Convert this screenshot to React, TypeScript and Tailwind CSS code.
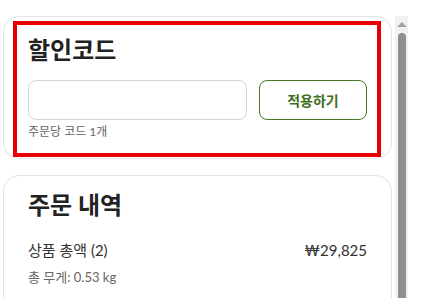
export default function App() {
  return (
    <div
      className="w-[435px] h-[298px] overflow-hidden bg-white flex pt-[16px]"
      style={{ fontFamily: '"Lato", "Noto Sans CJK KR", sans-serif' }}
    >
      {/* scroll content */}
      <div className="w-[395px] pl-[3px] pr-[3px] flex flex-col gap-[16px]">
        {/* discount code card */}
        <div className="border border-[#e3e3e3] rounded-[16px] bg-white pl-[9px] pt-[4px] pr-[10px] pb-[1px]">
          <div className="border-[4px] border-[#e80000] pl-[11px] pr-[10px] pt-[9px] pb-[13px]">
            <h2 className="text-[24px] leading-[32px] font-bold text-[#222]">할인코드</h2>
            <div className="flex gap-[12px] mt-[14px]">
              <input className="w-[219px] h-[40px] border border-[#d2d2d2] rounded-[8px] px-3 outline-none" />
              <button className="w-[110px] h-[40px] border border-[#4a7a25] rounded-[8px] text-[14px] font-bold text-[#3f6e1c]">
                적용하기
              </button>
            </div>
            <p className="mt-[4px] text-[12px] leading-[16px] text-[#666]">주문당 코드 1개</p>
          </div>
        </div>

        {/* order summary card */}
        <div className="border border-[#e3e3e3] rounded-[16px] bg-white pl-[24px] pr-[24px] pt-[13px] pb-6">
          <h2 className="text-[24px] leading-[32px] font-bold text-[#222]">주문 내역</h2>
          <div className="mt-[19px] flex justify-between text-[15px] leading-[20px] text-[#333]">
            <span>상품 총액 (2)</span>
            <span className="font-normal">₩29,825</span>
          </div>
          <p className="mt-[8px] text-[13px] leading-[18px] text-[#666]">총 무게: 0.53 kg</p>
          <div className="mt-[12px] flex justify-between text-[15px] leading-[20px] text-[#333]">
            <span>할인 금액</span>
            <span>₩0</span>
          </div>
        </div>
      </div>

      {/* scrollbar */}
      <div className="w-[13px] h-full bg-[#f1f1f1] flex flex-col items-center">
        <div className="mt-[6px] w-0 h-0 border-l-[5px] border-r-[5px] border-b-[5px] border-l-transparent border-r-transparent border-b-[#a3a3a3]" />
        <div className="mt-[6px] w-[8px] flex-1 rounded-t-full bg-[#8f8f8f]" />
      </div>
    </div>
  );
}
